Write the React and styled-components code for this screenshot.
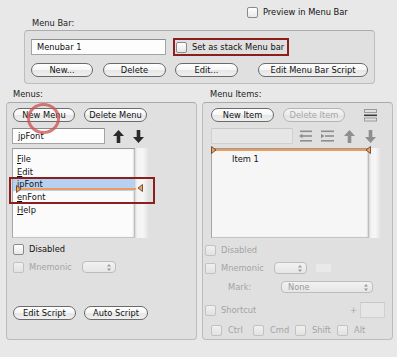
import React from "react";
import styled, { createGlobalStyle } from "styled-components";

const Global = createGlobalStyle`
  html, body { margin: 0; padding: 0; background: #e8e8e8; }
  body { font-family: "DejaVu Sans", "Liberation Sans", sans-serif; font-size: 8.3px; color: #1c1c1c; }
  * { box-sizing: border-box; }
`;

const Page = styled.div`
  position: relative;
  width: 397px;
  height: 357px;
  display: flex;
  flex-direction: column;
  background: #e8e8e8;
  overflow: hidden;
`;

const TopRow = styled.div`
  display: flex;
  align-items: center;
  gap: 5px;
  height: 11px;
  margin-top: 7px;
  padding-left: 247px;
`;

const SectionLabel = styled.div`
  height: 11px;
  line-height: 11px;
  margin-top: ${(p) => p.$mt || 0}px;
  padding-left: ${(p) => p.$pl || 0}px;
  color: #222;
`;

const Group = styled.div`
  display: flex;
  flex-direction: column;
  margin-left: ${(p) => p.$ml || 0}px;
  margin-top: ${(p) => p.$mt || 0}px;
  width: ${(p) => p.$w}px;
  height: ${(p) => p.$h}px;
  background: #e0e0e0;
  border: 1px solid #bdbdbd;
  border-top-color: #acacac;
  border-radius: 4px;
`;

const Row = styled.div`
  display: flex;
  align-items: center;
  gap: ${(p) => p.$gap ?? 5}px;
  height: ${(p) => p.$h}px;
  margin-top: ${(p) => p.$mt || 0}px;
  padding-left: ${(p) => p.$pl || 0}px;
  flex-shrink: 0;
`;

const Columns = styled.div`
  display: flex;
  gap: 5px;
  margin-top: 5px;
  padding-left: 6px;
`;

const Column = styled.div`
  display: flex;
  flex-direction: column;
  position: relative;
`;

const Button = styled.div`
  flex-shrink: 0;
  width: ${(p) => p.$w}px;
  height: 14px;
  margin-left: ${(p) => p.$ml || 0}px;
  border: 1px solid ${(p) => (p.$disabled ? "#b4b4b4" : "#6a6a6a")};
  border-radius: 8px;
  background: ${(p) =>
    p.$disabled
      ? "linear-gradient(#f4f4f4, #ececec 50%, #e4e4e4 51%, #ebebeb)"
      : "linear-gradient(#ffffff, #f6f6f6 50%, #e6e6e6 51%, #f0f0f0)"};
  color: ${(p) => (p.$disabled ? "#a8a8a8" : "#111")};
  display: flex;
  align-items: center;
  justify-content: center;
  line-height: 12px;
  white-space: nowrap;
`;

const TextField = styled.div`
  flex-shrink: 0;
  width: ${(p) => p.$w}px;
  height: ${(p) => p.$h || 16}px;
  border: 1px solid ${(p) => (p.$disabled ? "#d0d0d0" : "#a4a4a4")};
  border-top-color: ${(p) => (p.$disabled ? "#c8c8c8" : "#8c8c8c")};
  background: ${(p) => (p.$disabled ? "#e6e6e6" : "#fdfdfd")};
  padding-left: 5px;
  display: flex;
  align-items: center;
  color: #111;
`;

const Box = styled.div`
  flex-shrink: 0;
  width: 11px;
  height: 11px;
  border: 1px solid ${(p) => (p.$disabled ? "#c2c2c2" : "#8a8a8a")};
  border-radius: 2px;
  background: ${(p) =>
    p.$disabled ? "linear-gradient(#f0f0f0, #e2e2e2)" : "linear-gradient(#ffffff, #e8e8e8)"};
`;

const Label = styled.span`
  flex-shrink: 0;
  width: ${(p) => (p.$w ? `${p.$w}px` : "auto")};
  color: ${(p) => (p.$disabled ? "#a4a4a4" : "#111")};
  white-space: nowrap;
  line-height: 11px;
`;

const Highlight = styled.div`
  display: flex;
  align-items: center;
  gap: 5px;
  width: 116px;
  height: 18px;
  margin-left: 7px;
  border: 2px solid #8c1e1e;
  padding-left: 1px;
`;

const Panel = styled.div`
  display: flex;
  flex-direction: column;
  width: 191px;
  height: 238px;
  margin-top: 2px;
  background: #e0e0e0;
  border: 1px solid #bcbcbc;
  border-top-color: #aaaaaa;
  border-radius: 4px;
`;

const ListWrap = styled.div`
  display: flex;
  height: 90px;
  position: relative;
`;

const List = styled.div`
  position: relative;
  width: ${(p) => p.$w}px;
  height: 90px;
  background: ${(p) => p.$bg || "#fbfbfb"};
  border-left: 1px solid #a6a6a6;
  border-top: 1px solid #9a9a9a;
  border-bottom: 1px solid #c4c4c4;
  box-shadow: inset -2px 0 2px -1px #a8a8a8;
  display: flex;
  flex-direction: column;
  padding-top: 4px;
`;

const ScrollTrack = styled.div`
  width: ${(p) => p.$w}px;
  height: 90px;
  background: linear-gradient(to right, #d6d6d6 0, #f3f3f3 2px, #f6f6f6 60%, #e4e4e4 100%);
`;

const ListItem = styled.div`
  height: 12.7px;
  line-height: 12.7px;
  padding-left: ${(p) => p.$pl || 4}px;
  background: ${(p) => (p.$selected ? "#b6d2f2" : "transparent")};
  color: #111;
  white-space: nowrap;
  u { text-decoration: underline; text-underline-offset: 1px; }
`;

const InsertLine = styled.div`
  position: absolute;
  left: ${(p) => p.$l}px;
  width: ${(p) => p.$w}px;
  top: ${(p) => p.$t}px;
  height: 2px;
  background: #f09a5a;
`;

const Marker = styled.svg`
  position: absolute;
  left: ${(p) => p.$l}px;
  top: ${(p) => p.$t}px;
`;

const RedBox = styled.div`
  position: absolute;
  left: -3px;
  top: 29px;
  width: 146px;
  height: 27px;
  border: 2px solid #8c1e1e;
  pointer-events: none;
`;

const Circle = styled.div`
  position: absolute;
  left: 21px;
  top: 14px;
  width: 33px;
  height: 31px;
  border: 3px solid rgba(205, 85, 85, 0.78);
  border-radius: 50%;
  pointer-events: none;
`;

const Popup = styled.div`
  flex-shrink: 0;
  width: ${(p) => p.$w}px;
  height: 12px;
  border: 1px solid #bdbdbd;
  border-radius: 4px;
  background: linear-gradient(#f2f2f2, #e6e6e6);
  display: flex;
  align-items: center;
  justify-content: space-between;
  padding: 0 4px 0 ${(p) => (p.$text ? 6 : 4)}px;
  color: #9a9a9a;
  line-height: 10px;
`;

const SmallField = styled.div`
  width: 15px;
  height: 8px;
  margin-left: 4px;
  background: #e9e9e9;
`;

const Plus = styled.span`
  margin-left: 84px;
  color: #a4a4a4;
  width: 5px;
  line-height: 11px;
`;

const ModItem = styled.div`
  display: flex;
  align-items: center;
  gap: 6px;
  width: 42px;
  flex-shrink: 0;
`;

const Spacer = styled.div`
  flex: 1;
`;

const Icon = styled.svg`
  flex-shrink: 0;
  margin-left: ${(p) => p.$ml || 0}px;
`;

function UpArrow({ color, ml }) {
  return (
    <Icon $ml={ml} width="11" height="13" viewBox="0 0 11 13">
      <path d="M5.5 0 L11 6 L7.3 6 L7.3 13 L3.7 13 L3.7 6 L0 6 Z" fill={color} />
    </Icon>
  );
}

function DownArrow({ color, ml }) {
  return (
    <Icon $ml={ml} width="11" height="13" viewBox="0 0 11 13">
      <path d="M5.5 13 L11 7 L7.3 7 L7.3 0 L3.7 0 L3.7 7 L0 7 Z" fill={color} />
    </Icon>
  );
}

function OutdentIcon({ ml }) {
  return (
    <Icon $ml={ml} width="13" height="12" viewBox="0 0 13 12">
      <rect x="1" y="0.5" width="12" height="1.6" fill="#8e8e8e" />
      <path d="M0 6 L3.5 3.8 L3.5 8.2 Z" fill="#8e8e8e" />
      <rect x="3" y="5.2" width="10" height="1.6" fill="#8e8e8e" />
      <rect x="1" y="10" width="12" height="1.6" fill="#8e8e8e" />
    </Icon>
  );
}

function IndentIcon({ ml }) {
  return (
    <Icon $ml={ml} width="13" height="12" viewBox="0 0 13 12">
      <rect x="0" y="0.5" width="13" height="1.6" fill="#8e8e8e" />
      <path d="M3.5 6 L0 3.8 L0 8.2 Z" fill="#8e8e8e" />
      <rect x="4" y="5.2" width="9" height="1.6" fill="#8e8e8e" />
      <rect x="0" y="10" width="13" height="1.6" fill="#8e8e8e" />
    </Icon>
  );
}

function SeparatorIcon({ ml }) {
  return (
    <Icon $ml={ml} width="13" height="13" viewBox="0 0 13 13">
      <rect x="0.5" y="0.5" width="12" height="3" fill="none" stroke="#9a9a9a" strokeWidth="1" />
      <rect x="0" y="5.5" width="13" height="1.6" fill="#3a3a3a" />
      <rect x="0.5" y="9" width="12" height="3" fill="none" stroke="#9a9a9a" strokeWidth="1" />
    </Icon>
  );
}

function RightMarker({ l, t }) {
  return (
    <Marker $l={l} $t={t} width="6" height="8" viewBox="0 0 6 8">
      <path d="M0.5 0.5 L5 4 L0.5 7.5 Z" fill="#f2a060" stroke="#5a3a20" strokeWidth="0.8" />
    </Marker>
  );
}

function LeftMarker({ l, t }) {
  return (
    <Marker $l={l} $t={t} width="6" height="8" viewBox="0 0 6 8">
      <path d="M5.5 0.5 L1 4 L5.5 7.5 Z" fill="#f2a060" stroke="#5a3a20" strokeWidth="0.8" />
    </Marker>
  );
}

function PopupArrows() {
  return (
    <svg width="4" height="7" viewBox="0 0 4 7">
      <path d="M2 0 L4 2.5 L0 2.5 Z M2 7 L4 4.5 L0 4.5 Z" fill="#9a9a9a" />
    </svg>
  );
}

export default function App() {
  return (
    <Page>
      <Global />
      <TopRow>
        <Box />
        <Label>Preview in Menu Bar</Label>
      </TopRow>

      <SectionLabel $mt={0} $pl={32}>Menu Bar:</SectionLabel>
      <Group $ml={24} $mt={1} $w={351} $h={54}>
        <Row $h={18} $mt={7} $pl={6} $gap={0}>
          <TextField $w={135}>Menubar 1</TextField>
          <Highlight>
            <Box />
            <Label>Set as stack Menu bar</Label>
          </Highlight>
        </Row>
        <Row $h={14} $mt={7} $pl={6} $gap={0}>
          <Button $w={62}>New...</Button>
          <Button $w={63} $ml={10}>Delete</Button>
          <Button $w={63} $ml={9}>Edit...</Button>
          <Button $w={110} $ml={20}>Edit Menu Bar Script</Button>
        </Row>
      </Group>

      <Columns>
        <Column>
          <SectionLabel $pl={7}>Menus:</SectionLabel>
          <Panel>
            <Row $h={14} $mt={5} $pl={6} $gap={9}>
              <Button $w={62}>New Menu</Button>
              <Button $w={63}>Delete Menu</Button>
            </Row>
            <Row $h={16} $mt={6} $pl={5} $gap={0}>
              <TextField $w={93}>jpFont</TextField>
              <UpArrow color="#2a2a2a" ml={8} />
              <DownArrow color="#2a2a2a" ml={9} />
            </Row>
            <Row $h={90} $mt={4} $pl={5} $gap={0}>
              <ListWrap>
                <List $w={123}>
                  <ListItem><u>F</u>ile</ListItem>
                  <ListItem><u>E</u>dit</ListItem>
                  <ListItem $selected><u>j</u>pFont</ListItem>
                  <ListItem><u>e</u>nFont</ListItem>
                  <ListItem><u>H</u>elp</ListItem>
                  <InsertLine $l={4} $w={119} $t={39} />
                  <RightMarker l={3} t={36} />
                </List>
                <ScrollTrack $w={13} />
                <LeftMarker l={125} t={36} />
                <RedBox />
              </ListWrap>
            </Row>
            <Row $h={11} $mt={6} $pl={6} $gap={5}>
              <Box />
              <Label>Disabled</Label>
            </Row>
            <Row $h={12} $mt={6} $pl={6} $gap={5}>
              <Box $disabled />
              <Label $disabled $w={48}>Mnemonic</Label>
              <Popup $w={34}>
                <span />
                <PopupArrows />
              </Popup>
            </Row>
            <Spacer />
            <Row $h={14} $mt={0} $pl={6} $gap={8}>
              <Button $w={63}>Edit Script</Button>
              <Button $w={64}>Auto Script</Button>
            </Row>
            <Row $h={19} />
          </Panel>
          <Circle />
        </Column>

        <Column>
          <SectionLabel $pl={8}>Menu Items:</SectionLabel>
          <Panel>
            <Row $h={14} $mt={5} $pl={8} $gap={0}>
              <Button $w={63}>New Item</Button>
              <Button $w={62} $ml={9} $disabled>Delete Item</Button>
              <SeparatorIcon ml={19} />
            </Row>
            <Row $h={16} $mt={6} $pl={8} $gap={0}>
              <TextField $w={82} $disabled />
              <OutdentIcon ml={6} />
              <IndentIcon ml={9} />
              <UpArrow color="#8e8e8e" ml={10} />
              <DownArrow color="#8e8e8e" ml={10} />
            </Row>
            <Row $h={90} $mt={4} $pl={8} $gap={0}>
              <ListWrap>
                <List $w={158} $bg="#f6f6f6">
                  <InsertLine $l={0} $w={157} $t={0} />
                  <ListItem $pl={20}>Item 1</ListItem>
                  <RightMarker l={-1} t={-3} />
                </List>
                <ScrollTrack $w={11} />
                <LeftMarker l={154} t={-2} />
              </ListWrap>
            </Row>
            <Row $h={11} $mt={7} $pl={2} $gap={5}>
              <Box $disabled />
              <Label $disabled>Disabled</Label>
            </Row>
            <Row $h={12} $mt={6} $pl={2} $gap={5}>
              <Box $disabled />
              <Label $disabled $w={48}>Mnemonic</Label>
              <Popup $w={33}>
                <span />
                <PopupArrows />
              </Popup>
              <SmallField />
            </Row>
            <Row $h={12} $mt={7} $pl={25} $gap={5}>
              <Label $disabled $w={48}>Mark:</Label>
              <Popup $w={92} $text>
                <span>None</span>
                <PopupArrows />
              </Popup>
            </Row>
            <Row $h={16} $mt={9} $pl={2} $gap={5}>
              <Box $disabled />
              <Label $disabled $w={40}>Shortcut</Label>
              <Plus>+</Plus>
              <TextField $w={25} $disabled />
            </Row>
            <Row $h={12} $mt={6} $pl={8} $gap={0}>
              <ModItem><Box $disabled /><Label $disabled>Ctrl</Label></ModItem>
              <ModItem><Box $disabled /><Label $disabled>Cmd</Label></ModItem>
              <ModItem><Box $disabled /><Label $disabled>Shift</Label></ModItem>
              <ModItem><Box $disabled /><Label $disabled>Alt</Label></ModItem>
            </Row>
          </Panel>
        </Column>
      </Columns>
    </Page>
  );
}
